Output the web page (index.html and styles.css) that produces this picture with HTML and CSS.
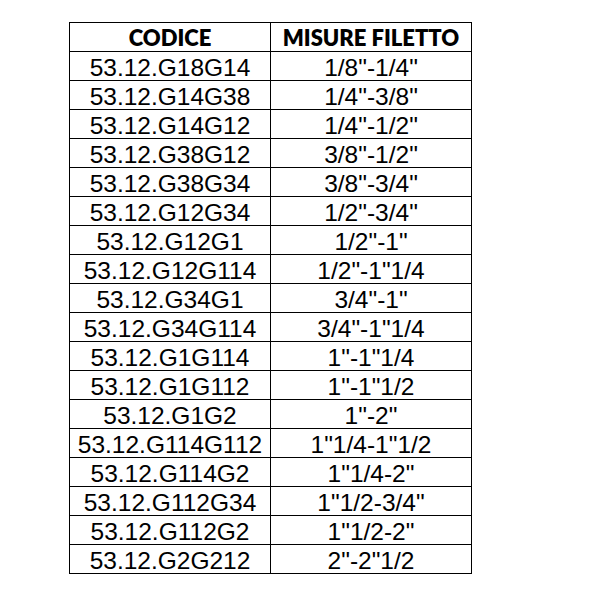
FILE: index.html
```html
<!DOCTYPE html>
<html>
<head>
<meta charset="utf-8">
<link rel="stylesheet" href="styles.css">
</head>
<body>
<div class="page">
<table class="grid">
<thead>
<tr><th>CODICE</th><th>MISURE FILETTO</th></tr>
</thead>
<tbody>
<tr><td>53.12.G18G14</td><td>1/8"-1/4"</td></tr>
<tr><td>53.12.G14G38</td><td>1/4"-3/8"</td></tr>
<tr><td>53.12.G14G12</td><td>1/4"-1/2"</td></tr>
<tr><td>53.12.G38G12</td><td>3/8"-1/2"</td></tr>
<tr><td>53.12.G38G34</td><td>3/8"-3/4"</td></tr>
<tr><td>53.12.G12G34</td><td>1/2"-3/4"</td></tr>
<tr><td>53.12.G12G1</td><td>1/2"-1"</td></tr>
<tr><td>53.12.G12G114</td><td>1/2"-1"1/4</td></tr>
<tr><td>53.12.G34G1</td><td>3/4"-1"</td></tr>
<tr><td>53.12.G34G114</td><td>3/4"-1"1/4</td></tr>
<tr><td>53.12.G1G114</td><td>1"-1"1/4</td></tr>
<tr><td>53.12.G1G112</td><td>1"-1"1/2</td></tr>
<tr><td>53.12.G1G2</td><td>1"-2"</td></tr>
<tr><td>53.12.G114G112</td><td>1"1/4-1"1/2</td></tr>
<tr><td>53.12.G114G2</td><td>1"1/4-2"</td></tr>
<tr><td>53.12.G112G34</td><td>1"1/2-3/4"</td></tr>
<tr><td>53.12.G112G2</td><td>1"1/2-2"</td></tr>
<tr><td>53.12.G2G212</td><td>2"-2"1/2</td></tr>
</tbody>
</table>
</div>
</body>
</html>
```
FILE: styles.css
```css
html, body {
  margin: 0;
  padding: 0;
  background: #ffffff;
}
.page {
  padding: 22px 0 0 69px;
}
.grid {
  border-collapse: collapse;
  table-layout: fixed;
  width: 403px;
  color: #000;
}
.grid th, .grid td {
  border: 1px solid #000;
  width: 201px;
  height: 29px;
  padding: 0;
  text-align: center;
  vertical-align: middle;
  box-sizing: border-box;
}
.grid th {
  font-family: "Lato", "Open Sans", sans-serif;
  font-weight: 800;
  font-size: 22px;
  line-height: 22px;
  padding-top: 2px;
}
.grid td {
  font-family: "Liberation Sans", Arial, sans-serif;
  font-size: 24.5px;
  line-height: 24px;
  padding-top: 3px;
}
```
